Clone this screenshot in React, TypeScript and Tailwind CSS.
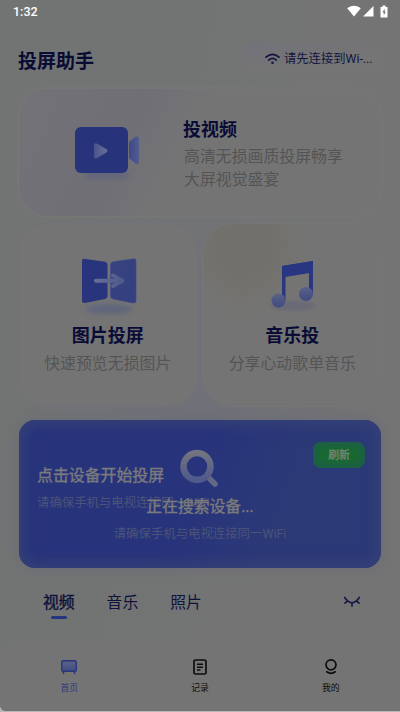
import { ReactNode } from 'react';

const PANEL_HINT = '请确保手机与电视连接同一WiFi';

function StatusBar() {
  return (
    <div className="flex h-6 shrink-0 items-center justify-between pr-[12px] pl-[13px] text-white">
      <span className="font-[Roboto] text-[12.500px] leading-none font-medium">
        1:32
      </span>
      <div className="-mt-[2px] flex items-center">
        <svg width="14" height="12" viewBox="0 0 14 12" fill="currentColor">
          <path d="M7 11.600.2 3.200C4.200-.2 9.800-.2 13.800 3.200Z" />
        </svg>
        <svg
          className="ml-[2px]"
          width="11"
          height="12"
          viewBox="0 0 11 12"
          fill="currentColor"
        >
          <path d="M10.500 1v10.500H0Z" />
        </svg>
        <svg
          className="ml-[6px]"
          width="8"
          height="13"
          viewBox="0 0 8 13"
          fill="currentColor"
        >
          <path d="M2.500.5h3V2H7.500v10.500H.5V2h2Z" />
          <path d="M4.600 3.600 2.500 7.500h1.300v3L5.700 6.600H4.600Z" fill="#717372" />
        </svg>
      </div>
    </div>
  );
}

function CameraIcon() {
  return (
    <svg width="68" height="58" viewBox="0 0 68 58">
      <defs>
        <linearGradient id="cam-tail" x1="0" x2="1">
          <stop offset="0" stopColor="#3d4a89" />
          <stop offset="1" stopColor="#515c90" />
        </linearGradient>
        <linearGradient id="cam-play" x1="0" x2="1">
          <stop offset="0" stopColor="#49538a" />
          <stop offset="1" stopColor="#6a719a" />
        </linearGradient>
        <filter id="cam-blur" x="-30%" y="-80%" width="160%" height="260%">
          <feGaussianBlur stdDeviation="2.500" />
        </filter>
      </defs>
      <rect x="9" y="44" width="45" height="8" rx="4" fill="#64667a" filter="url(#cam-blur)" />
      <path d="M54 15 60.500 9.800Q64 8 64 12V34Q64 38 60.500 36.500L54 31Z" fill="url(#cam-tail)" />
      <rect x="0" y="0" width="53" height="46" rx="6" fill="#27347b" />
      <path d="M19 18.500Q19 15 22.300 16.800L31.500 22.300Q33.500 23.800 31.500 25.200L22.300 31Q19 33 19 29Z" fill="url(#cam-play)" />
    </svg>
  );
}

function PictureIcon() {
  return (
    <svg className="ml-[2px]" width="58" height="60" viewBox="0 0 58 60">
      <defs>
        <linearGradient id="pic-right" x1="0" x2="1" y2="1">
          <stop offset="0" stopColor="#38437f" />
          <stop offset="1" stopColor="#333f80" />
        </linearGradient>
        <linearGradient id="pic-arrow" gradientUnits="userSpaceOnUse" x1="14" y1="0" x2="44" y2="0">
          <stop offset="0" stopColor="#697097" />
          <stop offset="1" stopColor="#4e588a" />
        </linearGradient>
        <filter id="pic-blur" x="-30%" y="-80%" width="160%" height="260%">
          <feGaussianBlur stdDeviation="2.500" />
        </filter>
      </defs>
      <ellipse cx="29" cy="51" rx="24" ry="5" fill="#61657b" filter="url(#pic-blur)" />
      <path d="M4 .8 25 3.800Q27.500 4.300 27.500 7V38Q27.500 40.500 25 41L5 45Q2 45.500 2 42.500V3Q2 .5 4 .8Z" fill="#28357d" />
      <path d="M54 .8 33 3.800Q30.500 4.300 30.500 7V38Q30.500 40.500 33 41L53 45Q56 45.500 56 42.500V3Q56 .5 54 .8Z" fill="url(#pic-right)" stroke="#3c4a91" strokeWidth=".6" />
      <path d="M16 22.800H40M33 17.500 42.500 22.800 33 28" fill="none" stroke="url(#pic-arrow)" strokeWidth="4" strokeLinecap="round" strokeLinejoin="round" />
    </svg>
  );
}

function MusicIcon() {
  return (
    <svg className="ml-[2px]" width="52" height="56" viewBox="0 0 52 56">
      <defs>
        <linearGradient id="note-head" x1="0" y1="0" x2="0" y2="1">
          <stop offset="0" stopColor="#596187" />
          <stop offset="1" stopColor="#3f4b80" />
        </linearGradient>
        <filter id="note-blur" x="-20%" y="-60%" width="140%" height="220%">
          <feGaussianBlur stdDeviation="1.500" />
        </filter>
      </defs>
      <ellipse cx="26" cy="48" rx="23" ry="5" fill="#696a76" filter="url(#note-blur)" />
      <path d="M15 8 46 3V37H42V14L18.500 18V43H15Z" fill="#293782" />
      <path d="M15 8 46 3V14.500L15 19.500Z" fill="#293782" />
      <circle cx="11.500" cy="42.500" r="7" fill="url(#note-head)" />
      <circle cx="39" cy="36" r="7" fill="url(#note-head)" />
    </svg>
  );
}

function SearchIcon() {
  return (
    <svg width="40" height="40" viewBox="0 0 40 40" fill="none">
      <defs>
        <linearGradient id="lens" x1="0" y1="0" x2="0" y2="1">
          <stop offset="0" stopColor="#727480" />
          <stop offset="1" stopColor="#50598b" />
        </linearGradient>
      </defs>
      <path d="m28 29 7 7" stroke="#626987" strokeWidth="5.500" strokeLinecap="round" />
      <circle cx="17" cy="18.500" r="13.500" stroke="url(#lens)" strokeWidth="6.500" />
    </svg>
  );
}

interface CastCardProps {
  title: string;
  description: string;
  icon: ReactNode;
  className: string;
}

function CastCard({ title, description, icon, className }: CastCardProps) {
  return (
    <div
      className={`flex h-[184px] flex-1 flex-col items-center rounded-[32px] border pt-[34px] ${className}`}
    >
      <div className="flex h-[64px] items-start justify-center">{icon}</div>
      <h2 className="mt-px text-[18px] leading-[26px] font-bold text-[#0a0c36]">
        {title}
      </h2>
      <p className="mt-[3px] text-[15.900px] leading-[24px] text-[#545454]">
        {description}
      </p>
    </div>
  );
}

function DevicePanel() {
  return (
    <section className="relative mx-[19px] mt-[13px] h-[148px] shrink-0 rounded-[16px] bg-[linear-gradient(110deg,#27337b_45%,#2b3977_70%)] pt-[43px] pl-[18px] shadow-[0_0_14px_#6a6b78,inset_0_0_14px_5px_#354176]">
      <h2 className="text-[15.900px] leading-[26px] text-[#7b7b7b] [-webkit-text-stroke:0.4px]">
        点击设备开始投屏
      </h2>
      <p className="mt-[4px] w-[174px] overflow-hidden text-[12.400px] leading-[20px] whitespace-nowrap text-[#4b5379]">
        {PANEL_HINT}
      </p>
      <button className="absolute top-[22px] right-[16px] h-[26px] w-[52px] rounded-[8px] bg-[#176a30] pt-[2px] text-[10.800px] text-[#74857a] shadow-[inset_0_0_8px_3px_#205b4e] [-webkit-text-stroke:0.3px]">
        刷新
      </button>

      {/* Searching state, floats over the panel */}
      <div className="absolute inset-x-0 top-[28px] flex flex-col items-center">
        <SearchIcon />
        <div className="mt-[6px] text-[15.800px] leading-[26px] text-[#7b7b7b] [-webkit-text-stroke:0.4px]">
          正在搜索设备...
        </div>
        <div className="mt-[4px] text-[12.400px] leading-[20px] text-[#4b5379]">
          {PANEL_HINT}
        </div>
      </div>
    </section>
  );
}

function MediaTabs() {
  return (
    <div className="mx-[43px] mt-[22px] flex h-[32px] shrink-0 items-start text-[15.800px] leading-[26px] text-[#10123b]">
      <div className="mr-[32px] flex flex-col items-center [-webkit-text-stroke:0.4px]">
        视频
        <span className="h-[3px] w-[16px] rounded-full bg-[#27357f]" />
      </div>
      <div className="mr-[32px]">音乐</div>
      <div>照片</div>
      <svg
        className="mt-[6px] mr-[-4px] ml-auto"
        width="18"
        height="12"
        viewBox="0 0 18 12"
        fill="none"
        stroke="#17194a"
        strokeWidth="1.700"
        strokeLinecap="round"
      >
        <path d="M1.700 1.500Q9 12 16.300 1.500M4.200 5.200 2 7.200M13.800 5.200 16 7.200M9 7.200V10" />
      </svg>
    </div>
  );
}

function BottomNav() {
  return (
    <nav className="mt-auto flex h-[71px] shrink-0 rounded-t-[24px] bg-[#747474] px-[4px] pt-[18px] pb-[12px] text-[8.800px] leading-[14px] text-[#0d0d0d]">
      <div className="flex flex-1 flex-col items-center text-[#27357d]">
        <svg width="18" height="18" viewBox="0 0 18 18">
          <defs>
            <linearGradient id="tv" x1="0" y1="0" x2="0" y2="1">
              <stop offset="0" stopColor="#5b6389" />
              <stop offset="1" stopColor="#414c82" />
            </linearGradient>
          </defs>
          <path d="m4 13.500-.8 2M14 13.500l.8 2" stroke="#27357d" strokeWidth="1.400" strokeLinecap="round" />
          <rect x="1.700" y="2.700" width="14.600" height="10.600" rx="1.500" fill="url(#tv)" stroke="#27357d" strokeWidth="1.400" />
        </svg>
        <span className="mt-[5px]">首页</span>
      </div>
      <div className="flex flex-1 flex-col items-center">
        <svg
          width="18"
          height="18"
          viewBox="0 0 18 18"
          fill="none"
          stroke="currentColor"
          strokeWidth="1.700"
        >
          <rect x="3" y="2" width="12" height="14" rx="1.500" />
          <path d="M6 6.300h6M6 9.200h6M6 12h3.500" strokeWidth="1.400" />
        </svg>
        <span className="mt-[5px]">记录</span>
      </div>
      <div className="flex flex-1 flex-col items-center">
        <svg
          width="18"
          height="18"
          viewBox="0 0 18 18"
          fill="none"
          stroke="currentColor"
          strokeWidth="1.700"
          strokeLinecap="round"
        >
          <circle cx="9" cy="6.800" r="5" />
          <path d="M4.800 13.800Q9 16.900 13.200 13.800" />
        </svg>
        <span className="mt-[5px]">我的</span>
      </div>
    </nav>
  );
}

export default function App() {
  return (
    <div className="h-[712px] w-[400px] overflow-hidden bg-[#b5b5b5] pb-px font-['Roboto','Noto_Sans_CJK_SC',sans-serif]">
      <div className="flex h-full flex-col overflow-hidden rounded-bl-[6px] bg-[#747474] bg-[radial-gradient(circle_at_50%_50%,#70707a_0%,transparent_45%),linear-gradient(100deg,#717473_20%,#747474_80%)]">
        <StatusBar />

        <header className="flex h-[63px] shrink-0 items-start justify-between px-[18px] pt-[19px]">
          <h1 className="pt-[5px] text-[19px] leading-[28px] font-bold text-[#090b33]">
            投屏助手
          </h1>
          <div className="flex h-[30px] w-[138px] items-center rounded-[12px] bg-[linear-gradient(170deg,#71717a_0%,#757575_60%)] pt-[2px] pl-[21px] text-[12.300px] text-[#13153f]">
            <svg
              className="mr-[4px]"
              width="15"
              height="12"
              viewBox="0 0 15 12"
              fill="none"
              stroke="currentColor"
              strokeWidth="1.700"
              strokeLinecap="round"
            >
              <path d="M1 4.200Q7.500-1.500 14 4.200M3.700 7.100Q7.500 3.700 11.300 7.100" />
              <circle cx="7.500" cy="9.800" r="1.300" fill="currentColor" stroke="none" />
            </svg>
            请先连接到Wi-...
          </div>
        </header>

        <main className="shrink-0 px-[17px]">
          <div className="flex h-[131px] rounded-[32px] border-2 border-[#767676] bg-[linear-gradient(115deg,#727277_0%,#716f76_30%,#747474_48%)] pt-[38px]">
            <div className="ml-[56px] w-[108px] shrink-0">
              <CameraIcon />
            </div>
            <div className="-mt-[10px]">
              <h2 className="text-[18px] leading-[26px] font-bold text-[#0a0c36]">
                投视频
              </h2>
              <p className="mt-[3px] ml-px w-[164px] text-[15.900px] leading-[22.500px] text-[#545454]">
                高清无损画质投屏畅享大屏视觉盛宴
              </p>
            </div>
          </div>

          <div className="mt-[5px] flex gap-[3px]">
            <CastCard
              title="图片投屏"
              description="快速预览无损图片"
              icon={<PictureIcon />}
              className="border-[#71717a] bg-[#747474]"
            />
            <CastCard
              title="音乐投"
              description="分享心动歌单音乐"
              icon={<MusicIcon />}
              className="border-[#767676] bg-[#747474] bg-[radial-gradient(ellipse_at_40px_20px,#72706a_0%,#73716c_35px,#747473_55px,transparent_75px)]"
            />
          </div>
        </main>

        <DevicePanel />
        <MediaTabs />
        <BottomNav />
      </div>
    </div>
  );
}
